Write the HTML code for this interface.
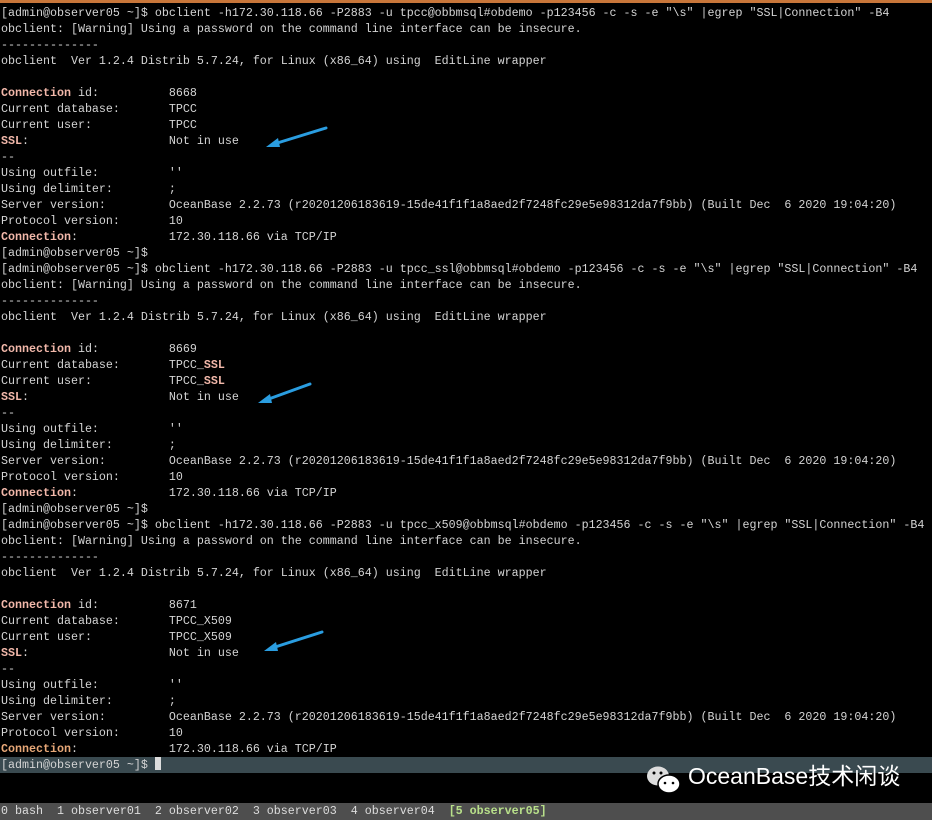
<!DOCTYPE html>
<html><head><meta charset="utf-8"><style>
body{margin:0;width:932px;height:820px;background:#000;overflow:hidden;position:relative;font-family:"Liberation Mono",monospace;font-size:11.67px;color:#d4d4d4}
.top{position:absolute;left:0;top:0;width:932px;height:3px;background:#c8763a}
pre{position:absolute;left:1px;top:5px;margin:0;font:inherit;line-height:16px;white-space:pre}
b{color:#f2b8aa;font-weight:bold}
.bar{position:absolute;left:0;top:757px;width:932px;height:16px;background:#3a4a50}
.cur{display:inline-block;width:6px;height:13px;background:#ddd;vertical-align:-2px}
.status{position:absolute;left:0;top:803px;width:932px;height:17px;background:#4e4e4e;color:#ddd;line-height:17px;padding-left:1px;white-space:pre}
.status span{color:#b8e08a;font-weight:bold}
.wm{position:absolute;left:648px;top:760px;font-family:"Liberation Sans","Noto Sans CJK SC",sans-serif;font-size:23px;color:#fff;line-height:32px}
svg.a{position:absolute}
</style></head><body>
<div class="top"></div>
<div class="bar"></div>
<pre>[admin@observer05 ~]$ obclient -h172.30.118.66 -P2883 -u tpcc@obbmsql#obdemo -p123456 -c -s -e "\s" |egrep "SSL|Connection" -B4
obclient: [Warning] Using a password on the command line interface can be insecure.
--------------
obclient  Ver 1.2.4 Distrib 5.7.24, for Linux (x86_64) using  EditLine wrapper

<b>Connection</b> id:          8668
Current database:       TPCC
Current user:           TPCC
<b>SSL</b>:                    Not in use
--
Using outfile:          ''
Using delimiter:        ;
Server version:         OceanBase 2.2.73 (r20201206183619-15de41f1f1a8aed2f7248fc29e5e98312da7f9bb) (Built Dec  6 2020 19:04:20)
Protocol version:       10
<b>Connection</b>:             172.30.118.66 via TCP/IP
[admin@observer05 ~]$
[admin@observer05 ~]$ obclient -h172.30.118.66 -P2883 -u tpcc_ssl@obbmsql#obdemo -p123456 -c -s -e "\s" |egrep "SSL|Connection" -B4
obclient: [Warning] Using a password on the command line interface can be insecure.
--------------
obclient  Ver 1.2.4 Distrib 5.7.24, for Linux (x86_64) using  EditLine wrapper

<b>Connection</b> id:          8669
Current database:       TPCC_<b>SSL</b>
Current user:           TPCC_<b>SSL</b>
<b>SSL</b>:                    Not in use
--
Using outfile:          ''
Using delimiter:        ;
Server version:         OceanBase 2.2.73 (r20201206183619-15de41f1f1a8aed2f7248fc29e5e98312da7f9bb) (Built Dec  6 2020 19:04:20)
Protocol version:       10
<b>Connection</b>:             172.30.118.66 via TCP/IP
[admin@observer05 ~]$
[admin@observer05 ~]$ obclient -h172.30.118.66 -P2883 -u tpcc_x509@obbmsql#obdemo -p123456 -c -s -e "\s" |egrep "SSL|Connection" -B4
obclient: [Warning] Using a password on the command line interface can be insecure.
--------------
obclient  Ver 1.2.4 Distrib 5.7.24, for Linux (x86_64) using  EditLine wrapper

<b>Connection</b> id:          8671
Current database:       TPCC_X509
Current user:           TPCC_X509
<b>SSL</b>:                    Not in use
--
Using outfile:          ''
Using delimiter:        ;
Server version:         OceanBase 2.2.73 (r20201206183619-15de41f1f1a8aed2f7248fc29e5e98312da7f9bb) (Built Dec  6 2020 19:04:20)
Protocol version:       10
<b style="color:#e8a878">Connection</b>:             172.30.118.66 via TCP/IP
[admin@observer05 ~]$ <span class="cur"></span></pre>
<svg class="a" style="left:262px;top:124px" width="70" height="30"><path d="M64 4 L12 20" stroke="#2a9de0" stroke-width="3" stroke-linecap="round"/><path d="M4 23 L16 14 L18 23 Z" fill="#2a9de0"/></svg>
<svg class="a" style="left:254px;top:380px" width="70" height="30"><path d="M56 4 L12 20" stroke="#2a9de0" stroke-width="3" stroke-linecap="round"/><path d="M4 23 L16 14 L18 23 Z" fill="#2a9de0"/></svg>
<svg class="a" style="left:260px;top:628px" width="70" height="30"><path d="M62 4 L12 20" stroke="#2a9de0" stroke-width="3" stroke-linecap="round"/><path d="M4 23 L16 14 L18 23 Z" fill="#2a9de0"/></svg>
<svg class="a" style="left:645px;top:763px" width="40" height="34"><ellipse cx="13" cy="13" rx="11" ry="9.5" fill="#ddd"/><ellipse cx="24" cy="21" rx="11" ry="9" fill="#fff" stroke="#000" stroke-width="1.5"/><circle cx="9" cy="10" r="1.5" fill="#000"/><circle cx="16" cy="10" r="1.5" fill="#000"/><circle cx="20" cy="20" r="1.3" fill="#000"/><circle cx="28" cy="20" r="1.3" fill="#000"/></svg>
<div class="wm" style="left:688px">OceanBase技术闲谈</div>
<div class="status">0 bash  1 observer01  2 observer02  3 observer03  4 observer04  <span>[5 observer05]</span></div>
</body></html>
